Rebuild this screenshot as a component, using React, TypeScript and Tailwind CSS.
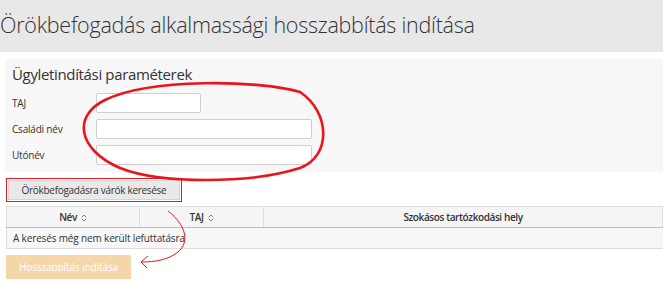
// Örökbefogadás alkalmassági hosszabbítás indítása — start form with annotations

function SortIcon() {
  return (
    <svg viewBox="0 0 8 10" className="ml-1 inline-block h-[8px] w-[6px] align-[-1px]" aria-hidden="true">
      <path d="M1 4 L4 1 L7 4" stroke="#666" strokeWidth="1.1" fill="none" />
      <path d="M1 6 L4 9 L7 6" stroke="#666" strokeWidth="1.1" fill="none" />
    </svg>
  );
}

function Field({ label, wide }: { label: string; wide?: boolean }) {
  return (
    <div className="flex items-center">
      <label className="w-[84px] text-[10px] tracking-[-0.2px] text-[#333]">{label}</label>
      <input
        type="text"
        className={`h-[20px] ${wide ? 'w-[216px]' : 'w-[105px]'} rounded-[2px] border border-[#cfcfcf] bg-white`}
      />
    </div>
  );
}

/** Red markup drawn over the screenshot */
function Annotations() {
  return (
    <svg className="pointer-events-none absolute inset-0 h-full w-full" viewBox="0 0 663 282" aria-hidden="true">
      <path
        d="M300 92 C260 80 150 78 105 100 C72 116 78 150 120 168 C160 184 250 184 300 168 C332 156 330 112 300 92 Z"
        stroke="#e8151d"
        strokeWidth="2.6"
        fill="none"
      />
      <path d="M168 211 C186 225 190 242 178 252 C168 260 155 262 141 262" stroke="#e8151d" strokeWidth="1" fill="none" />
      <path d="M148 256 L141 262 L147 268" stroke="#e8151d" strokeWidth="1" fill="none" />
    </svg>
  );
}

export default function App() {
  return (
    <div className="relative h-[282px] w-[663px] overflow-hidden bg-white font-['Open_Sans',sans-serif] text-[#333]">
      <div className="flex h-[52px] items-center bg-[#e8e8e8]">
        <h1 className="mt-[-2px] text-[21.5px] font-light tracking-[-0.25px] text-[#333]">
          Örökbefogadás alkalmassági hosszabbítás indítása
        </h1>
      </div>

      <div className="ml-[5px] mt-[7px] h-[113px] bg-[#f7f7f7] px-[7px] pt-[4px]">
        <h2 className="text-[15px] leading-[22px] tracking-[-0.35px] text-[#333]">Ügyletindítási paraméterek</h2>
        <div className="mt-[8px] flex flex-col gap-[6px]">
          <Field label="TAJ" />
          <Field label="Családi név" wide />
          <Field label="Utónév" wide />
        </div>
      </div>

      <div className="ml-[6px] mt-[6px] w-[176px] border border-[#e11b22] p-[1px]">
        <button className="block h-[20px] w-full border border-[#d4d4d4] bg-[#e9e9e9] text-[10px] tracking-[-0.3px] text-[#333]">
          Örökbefogadásra várók keresése
        </button>
      </div>

      <table className="ml-[6px] mt-[4px] w-[657px] border-collapse text-[10px]">
        <thead>
          <tr className="h-[21px] bg-[#f5f5f5]">
            <th className="w-[133px] border border-[#ddd] border-b-[#bdbdbd] font-semibold tracking-[-0.4px]">
              Név<SortIcon />
            </th>
            <th className="w-[124px] border border-[#ddd] border-b-[#bdbdbd] font-semibold tracking-[-0.4px]">
              TAJ<SortIcon />
            </th>
            <th className="border border-[#ddd] border-b-[#bdbdbd] font-semibold tracking-[-0.4px]">
              Szokásos tartózkodási hely
            </th>
          </tr>
        </thead>
        <tbody>
          <tr className="h-[21px] bg-[#f7f7f7]">
            <td colSpan={3} className="border-b border-l border-[#ddd] px-[6px] tracking-[-0.15px]">
              A keresés még nem került lefuttatásra
            </td>
          </tr>
        </tbody>
      </table>

      <button
        disabled
        className="ml-[6px] mt-[6px] block h-[24px] w-[125px] rounded-[1px] bg-[#f5d6a9] text-[10px] tracking-[-0.1px] text-white"
      >
        Hosszabbítás indítása
      </button>

      <Annotations />
    </div>
  );
}
